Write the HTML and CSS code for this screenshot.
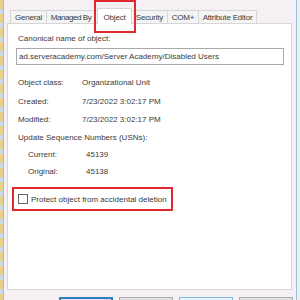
FILE: index.html
```html
<!DOCTYPE html>
<html lang="en">
<head>
    <meta charset="UTF-8">
    <title>Object properties</title>
    <link rel="stylesheet" href="styles.css">
</head>
<body>
    <div class="screen">
        <div class="desk_strip"></div>
        <div class="dialog">
            <div class="tabs">
                <div class="tab t_general">General</div>
                <div class="tab t_managed">Managed By</div>
                <div class="tab t_object active">Object</div>
                <div class="tab t_security">Security</div>
                <div class="tab t_com">COM+</div>
                <div class="tab t_attr">Attribute Editor</div>
            </div>
            <div class="panel">
                <div class="caption">Canonical name of object:</div>
                <div class="textbox">ad.serveracademy.com/Server Academy/Disabled Users</div>
                <div class="info">
                    <div class="row"><span class="key">Object class:</span><span>Organizational Unit</span></div>
                    <div class="row"><span class="key">Created:</span><span>7/23/2022 3:02:17 PM</span></div>
                    <div class="row"><span class="key">Modified:</span><span>7/23/2022 3:02:17 PM</span></div>
                </div>
                <div class="usn_title">Update Sequence Numbers (USNs):</div>
                <div class="usn">
                    <div class="row"><span class="key">Current:</span><span>45139</span></div>
                    <div class="row"><span class="key">Original:</span><span>45138</span></div>
                </div>
                <div class="protect">
                    <span class="checkbox"></span>
                    <span>Protect object from accidental deletion</span>
                </div>
            </div>
            <div class="buttons">
                <div class="btn default"></div>
                <div class="btn"></div>
                <div class="btn hover"></div>
                <div class="btn"></div>
            </div>
            <div class="mark"></div>
        </div>
        <div class="desk_right"></div>
    </div>
</body>
</html>
```

FILE: styles.css
```css
*{
    margin: 0;
    padding: 0;
    box-sizing: border-box;
}
body{
    width: 300px;
    height: 300px;
    overflow: hidden;
    font-family: "Liberation Sans", Arial, sans-serif;
    font-size: 8px;
    color: #3a3a3a;
}
.screen{
    display: flex;
    height: 300px;
    overflow: hidden;
}
.desk_strip{
    width: 3px;
    background: repeating-linear-gradient(180deg, #e8cf8a 0px, #e8cf8a 9px, #c9dbe8 9px, #c9dbe8 14px);
}
.dialog{
    width: 294px;
    background: #f6f0f4;
    border-left: 1px solid #94c2e2;
    border-right: 1px solid #94c2e2;
    padding: 10px 3px 0 3px;
    position: relative;
    overflow: hidden;
}
.desk_right{
    flex: 1;
    background: #eeeeee;
}
.tabs{
    display: flex;
    height: 13px;
    padding-left: 3px;
}
.tab{
    height: 13px;
    line-height: 13px;
    text-align: center;
    background: #f4f4f4;
    border: 1px solid #d6d6d6;
    border-bottom: none;
    margin-left: -1px;
    white-space: nowrap;
    letter-spacing: -0.2px;
}
.t_general{ width: 37px; margin-left: 0; }
.t_managed{ width: 52px; letter-spacing: -0.45px; padding-right: 2px; }
.t_object{ width: 35px; }
.t_security{ width: 37px; }
.t_com{ width: 32px; }
.t_attr{ width: 59px; }
.tab.active{
    background: #fff;
    height: 16px;
    margin-top: -2px;
    line-height: 17px;
    position: relative;
    z-index: 1;
}
.panel{
    height: 267px;
    width: 285px;
    background: #fff;
    border: 1px solid #d6d6d6;
    padding-left: 9px;
}
.caption{
    margin-top: 10px;
    line-height: 10px;
    padding-left: 1px;
}
.textbox{
    margin-top: 4px;
    margin-left: -1px;
    width: 268px;
    height: 17px;
    line-height: 15px;
    border: 1px solid #a9a9a9;
    padding-left: 2px;
    white-space: nowrap;
}
.info{
    margin-top: 9px;
}
.row{
    display: flex;
    height: 18.5px;
    line-height: 18.5px;
    padding-left: 1px;
}
.info .key{
    width: 64px;
}
.usn_title{
    height: 16px;
    line-height: 16px;
    padding-left: 1px;
}
.usn{
    padding-left: 10px;
}
.usn .row{
    height: 17.5px;
    line-height: 17.5px;
}
.usn .key{
    width: 58px;
}
.protect{
    margin-top: 6.5px;
    margin-left: -5px;
    width: 161px;
    height: 24px;
    border: 2px solid #e0282e;
    display: flex;
    align-items: center;
    gap: 3px;
    padding-left: 4px;
    white-space: nowrap;
}
.checkbox{
    width: 10px;
    height: 10px;
    border: 1px solid #666;
    background: #fff;
}
.buttons{
    display: flex;
    justify-content: flex-end;
    gap: 6px;
    margin-top: 7px;
}
.btn{
    width: 54px;
    height: 23px;
    background: #e1e1e1;
    border: 1px solid #adadad;
}
.btn.default{
    border: 2px solid #2f7fc1;
}
.btn.hover{
    background: #e5f1fb;
    border-color: #80b9e8;
}
.mark{
    position: absolute;
    left: 90px;
    top: 0;
    width: 42px;
    height: 33px;
    border: 2px solid #e0282e;
    z-index: 2;
}
```
